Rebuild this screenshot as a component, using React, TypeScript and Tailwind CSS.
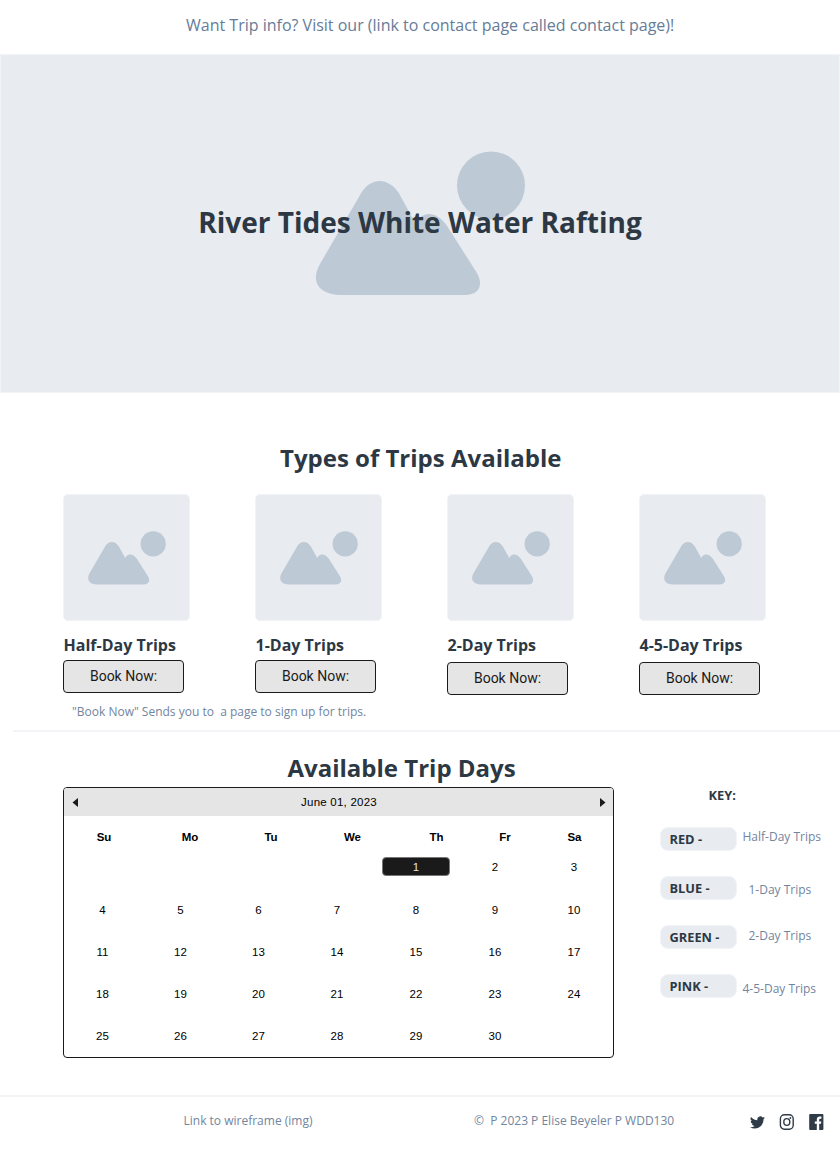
import React from "react";

function Placeholder({ className }: { className: string }) {
  return (
    <svg viewBox="0 0 209 144" className={`overflow-visible ${className}`} fill="#bdc9d5" aria-hidden="true">
      <circle cx="175" cy="34.5" r="34" />
      <path d="M45.5 41.5C55 26 72 26 82.5 41.5L99.8 73C105 60 120 59 131 75L160 120.5C168 133 164 144 149 144H26C3 144-6 131 4 113Z" />
    </svg>
  );
}

const trips = [
  { name: "Half-Day Trips", button: "mt-[3px]" },
  { name: "1-Day Trips", button: "mt-[3px]" },
  { name: "2-Day Trips", button: "mt-[5px]" },
  { name: "4-5-Day Trips", button: "mt-[5px]" },
];

const keys = [
  { color: "RED -", label: "Half-Day Trips", place: "ml-[5.5px] -mt-[5px]" },
  { color: "BLUE -", label: "1-Day Trips", place: "ml-[11.5px] mt-[3px]" },
  { color: "GREEN -", label: "2-Day Trips", place: "ml-[11.5px] -mt-[3px]" },
  { color: "PINK -", label: "4-5-Day Trips", place: "ml-[5.5px] mt-[5px]" },
];

const weekdays = ["Su", "Mo", "Tu", "We", "Th", "Fr", "Sa"];
const leadingBlanks = 4;
const days = Array.from({ length: 34 }, (_, i) => i - leadingBlanks + 1);

function TripCards() {
  return (
    <div className="ml-[63px] mt-[20px] flex h-[208px] gap-[65px]">
      {trips.map((t) => (
        <article key={t.name} className="w-[127px]">
          <div className="flex h-[127px] rounded-[5px] border border-[#f1f3f6] bg-[#e8ebf0] pl-[23.5px] pt-[35.5px]">
            <Placeholder className="h-[53.5px] w-[78px]" />
          </div>
          <h3 className="mt-[12px] h-6 whitespace-nowrap pl-[0.5px] text-[16px] font-bold leading-6">{t.name}</h3>
          <button
            className={`${t.button} block h-[33px] w-[121px] rounded-[4px] border border-[#1a1a1a] bg-[#e5e5e5] font-[Roboto,'Liberation_Sans',sans-serif] text-[14px] text-[#1a1a1a]`}
          >
            Book Now:
          </button>
        </article>
      ))}
    </div>
  );
}

function Calendar() {
  return (
    <div className="h-[271px] w-[551px] overflow-hidden rounded-[4px] border border-[#1a1a1a] font-['Liberation_Sans',Arial,sans-serif] text-[11.5px] leading-[14px] text-black">
      <div className="flex h-[28px] items-center justify-between bg-[#e5e5e5] pl-[8px] pr-[7px]">
        <svg width="6" height="9" viewBox="0 0 6 9" fill="#1a1a1a"><path d="M6 0L.5 4.5L6 9Z" /></svg>
        <span className="tracking-[0.23px]">June 01, 2023</span>
        <svg width="6" height="9" viewBox="0 0 6 9" fill="#1a1a1a"><path d="M0 0L5.5 4.5L0 9Z" /></svg>
      </div>
      <div className="grid h-[42px] grid-cols-[80px_92px_70px_93px_75px_62px_77px] items-center text-center font-bold">
        {weekdays.map((d) => <span key={d}>{d}</span>)}
      </div>
      <div className="mt-[-12px] grid auto-rows-[42px] grid-cols-[77px_79px_77px_80px_78px_80px_78px] items-center justify-items-center">
        {days.map((d) => (
          <span
            key={d}
            className={
              d === 1
                ? "flex h-[19px] w-[68px] -translate-y-px items-center justify-center rounded-[4px] border border-[#777] bg-[#1a1a1a] pt-px text-[#e5e5e5]"
                : d > 3
                  ? "pt-[2px]"
                  : ""
            }
          >
            {d > 0 ? d : ""}
          </span>
        ))}
      </div>
    </div>
  );
}

function TripKey() {
  return (
    <aside className="ml-[46px] text-[12px] leading-4">
      <h3 className="ml-[48.5px] text-[12.8px] font-bold">KEY:</h3>
      <div className="mt-[24px] flex flex-col gap-[25px]">
        {keys.map((k) => (
          <div key={k.color} className="flex h-6 items-center">
            <b className="h-6 w-[77px] rounded-[8px] border border-[#f1f3f6] bg-[#e8ebf0] pl-[8.5px] pt-[3px] text-[12.8px]">{k.color}</b>
            <span className={`${k.place} whitespace-nowrap text-[#71859e]`}>{k.label}</span>
          </div>
        ))}
      </div>
    </aside>
  );
}

function SocialIcons() {
  return (
    <div className="flex items-center gap-[14px] pt-px text-[#2f3b47]">
      <svg width="15" height="15" viewBox="0 0 24 24" fill="currentColor">
        <path d="M23.95 4.57a10 10 0 0 1-2.82.77 4.96 4.96 0 0 0 2.16-2.72c-.95.55-2 .96-3.13 1.18a4.92 4.92 0 0 0-8.38 4.48C7.69 8.1 4.07 6.13 1.64 3.16a4.92 4.92 0 0 0 1.52 6.57 4.9 4.9 0 0 1-2.23-.61v.06a4.92 4.92 0 0 0 3.95 4.83 5 5 0 0 1-2.21.08 4.94 4.94 0 0 0 4.6 3.42A9.87 9.87 0 0 1 0 19.54a14 14 0 0 0 7.55 2.21c9.05 0 14-7.5 14-13.98 0-.21 0-.42-.02-.63a9.94 9.94 0 0 0 2.46-2.55z" />
      </svg>
      <svg width="16" height="16" viewBox="0 0 16 16" fill="none" stroke="currentColor" strokeWidth="1.4">
        <rect x="1.4" y=".8" width="12.8" height="14.4" rx="4" />
        <ellipse cx="7.8" cy="8" rx="3" ry="3.4" />
        <circle cx="11.4" cy="4" r=".9" fill="currentColor" stroke="none" />
      </svg>
      <svg width="16" height="16" viewBox="0 0 16 16" fill="currentColor">
        <path d="M1.2 0H13.4Q14.4 0 14.4 1V15Q14.4 16 13.4 16H10.2V9.8H12L12.3 7.4H10.2V5.9C10.2 5.2 10.5 4.8 11.2 4.8H12.4V2.6C11.8 2.5 11.2 2.4 10.7 2.4C8.9 2.4 7.8 3.6 7.8 5.6V7.4H5.8V9.8H7.8V16H1.2Q.2 16 .2 15V1Q.2 0 1.2 0Z" />
      </svg>
    </div>
  );
}

export default function App() {
  return (
    <div className="h-[1150px] w-[840px] overflow-hidden bg-white font-['Open_Sans',sans-serif] text-[#2c3843]">
      <header className="h-[54px] pl-[186px] pt-[13px] text-[16px] leading-6 text-[#667c97]">
        Want Trip info? Visit our (link to contact page called contact page)!
      </header>
      <section className="grid h-[339px] border border-[#f1f3f6] bg-[#e8ebf0]">
        <Placeholder className="col-start-1 row-start-1 ml-[315px] mt-[96px] h-[144px] w-[209px]" />
        <h1 className="col-start-1 row-start-1 pt-[147px] text-center text-[28px] font-bold leading-10">
          River Tides White Water Rafting
        </h1>
      </section>
      <section className="pt-[48px]">
        <h2 className="pl-[280px] text-[24px] font-bold leading-[33px]">Types of Trips Available</h2>
        <TripCards />
        <p className="ml-[72px] mt-[2px] whitespace-pre text-[12px] leading-4 text-[#71859e]">
          {'"Book Now" Sends you to  a page to sign up for trips.'}
        </p>
      </section>
      <section className="ml-[13px] mt-[10px] h-[365px] border-t-2 border-[#f2f4f8] pl-[50px] pt-[19px]">
        <h2 className="h-[36px] pl-[224.5px] text-[24px] font-bold leading-[33px]">Available Trip Days</h2>
        <div className="flex">
          <Calendar />
          <TripKey />
        </div>
      </section>
      <footer className="flex h-[55px] items-start border-t-2 border-[#f2f4f8] pt-[16px] text-[12px] leading-4 text-[#71859e]">
        <span className="ml-[183.5px] w-[290.5px]">Link to wireframe (img)</span>
        <span className="w-[276px] whitespace-pre">{"©  P 2023 P Elise Beyeler P WDD130"}</span>
        <SocialIcons />
      </footer>
    </div>
  );
}
